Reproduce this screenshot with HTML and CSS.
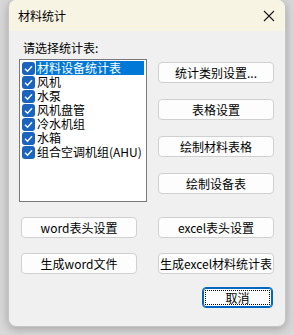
FILE: index.html
```html
<!DOCTYPE html>
<html lang="zh-CN">
<head>
	<meta charset="UTF-8">
	<title>材料统计</title>
	<link rel="stylesheet" href="styles.css">
</head>
<body>
	<div class="dialog">
		<div class="title-bar">
			<span class="title">材料统计</span>
			<svg class="close" width="12" height="12" viewBox="0 0 12 12">
				<path d="M1 1 L11 11 M11 1 L1 11" stroke="#1a1a1a" stroke-width="1.1" fill="none"/>
			</svg>
		</div>
		<div class="content">
			<p class="label">请选择统计表:</p>
			<div class="main">
				<ul class="list">
					<li class="item selected"><span class="check"></span><span class="text">材料设备统计表</span></li>
					<li class="item"><span class="check"></span><span class="text">风机</span></li>
					<li class="item"><span class="check"></span><span class="text">水泵</span></li>
					<li class="item"><span class="check"></span><span class="text">风机盘管</span></li>
					<li class="item"><span class="check"></span><span class="text">冷水机组</span></li>
					<li class="item"><span class="check"></span><span class="text">水箱</span></li>
					<li class="item"><span class="check"></span><span class="text">组合空调机组(AHU)</span></li>
				</ul>
				<div class="side">
					<button class="btn">统计类别设置...</button>
					<button class="btn">表格设置</button>
					<button class="btn">绘制材料表格</button>
					<button class="btn">绘制设备表</button>
				</div>
			</div>
			<div class="row">
				<button class="btn">word表头设置</button>
				<button class="btn">excel表头设置</button>
			</div>
			<div class="row">
				<button class="btn">生成word文件</button>
				<button class="btn">生成excel材料统计表</button>
			</div>
			<div class="footer">
				<button class="btn cancel"><span>取消</span></button>
			</div>
		</div>
	</div>
</body>
</html>
```

FILE: styles.css
```css
* {
	padding: 0;
	margin: 0;
	box-sizing: border-box;
}
html, body {
	width: 100%;
	height: 100%;
	background: #d8d8d8;
	overflow: hidden;
	font-family: "Noto Sans CJK SC", "Noto Sans", sans-serif;
	font-size: 12px;
	color: #000;
}
.dialog {
	width: 278px;
	height: 327px;
	margin-left: 8px;
	background: #f0f0f0;
	border: 1px solid #c4c4c4;
	border-top: none;
	border-radius: 8px;
	box-shadow: 0 2px 10px rgba(0, 0, 0, 0.25);
	overflow: hidden;
}
.title-bar {
	height: 31px;
	background: #f8f4e3;
	display: flex;
	align-items: center;
	justify-content: space-between;
	padding: 0 10px 0 9px;
}
.title {
	font-size: 12px;
	line-height: 14px;
}
.content {
	padding: 0 11px 0 10px;
}
.label {
	margin-top: 10px;
	padding-left: 4px;
	height: 18px;
	line-height: 14px;
}
.main {
	display: flex;
	gap: 11px;
}
.list {
	list-style: none;
	width: 129px;
	height: 143px;
	background: #fff;
	border: 1px solid #7a7a7a;
	padding: 1px 2px 0 2px;
}
.item {
	display: flex;
	align-items: center;
	height: 14px;
	font-size: 12px;
	line-height: 14px;
	white-space: nowrap;
}
.check {
	width: 13px;
	height: 13px;
	border-radius: 3px;
	background: #1a64be url("data:image/svg+xml,%3Csvg xmlns='http://www.w3.org/2000/svg' width='13' height='13'%3E%3Cpath d='M3 6.8 L5.5 9.2 L10 4.2' stroke='white' stroke-width='1.3' fill='none'/%3E%3C/svg%3E") no-repeat center;
	flex: none;
	margin-right: 1px;
}
.text {
	flex: 1;
	height: 14px;
	padding-left: 1px;
}
.selected .text {
	background: #0078d7;
	color: #fff;
}
.side {
	display: flex;
	flex-direction: column;
	gap: 16px;
	padding-top: 3px;
}
.btn {
	width: 116px;
	height: 21px;
	background: #fdfdfd;
	border: 1px solid #d0d0d0;
	border-radius: 4px;
	font-family: inherit;
	font-size: 12px;
	line-height: 14px;
	color: #000;
	white-space: nowrap;
	padding: 0;
}
.row {
	display: flex;
	gap: 21px;
	padding-left: 2px;
	margin-top: 15px;
}
.footer {
	display: flex;
	justify-content: flex-end;
	padding-right: 1px;
	margin-top: 13px;
}
.cancel {
	width: 71px;
	border: 1px solid #0067c0;
	box-shadow: inset 0 0 0 1px #0067c0;
	padding: 2px;
}
.cancel span {
	display: block;
	height: 100%;
	border: 1px dotted #000;
	line-height: 13px;
}
```
